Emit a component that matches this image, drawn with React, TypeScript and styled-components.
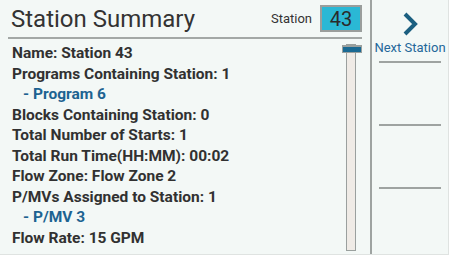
import React from "react";
import styled, { createGlobalStyle } from "styled-components";

const Global = createGlobalStyle`
  html, body { margin: 0; padding: 0; background: #ffffff; }
  body { font-family: Roboto, "Liberation Sans", Arial, sans-serif; }
`;

const Screen = styled.div`
  width: 449px;
  height: 255px;
  box-sizing: border-box;
  border-right: 1px solid #dfe3e1;
  border-bottom: 1px solid #dfe3e1;
  background: #f3f8f6;
  display: flex;
  flex-direction: row;
  overflow: hidden;
`;

const Main = styled.div`
  width: 370px;
  flex-shrink: 0;
  display: flex;
  flex-direction: column;
`;

const Header = styled.div`
  height: 37px;
  margin: 0 8px 0 8px;
  border-bottom: 2px solid #a3a8a6;
  display: flex;
  align-items: flex-start;
  justify-content: space-between;
`;

const Title = styled.div`
  font-size: 24px;
  color: #333;
  padding: 5px 0 0 3px;
  line-height: 28px;
`;

const StationPick = styled.div`
  display: flex;
  align-items: center;
  gap: 8px;
  margin-top: 5px;
`;

const StationLabel = styled.span`
  font-size: 13px;
  color: #333;
`;

const StationBox = styled.div`
  width: 42px;
  height: 27px;
  box-sizing: border-box;
  border: 2px solid #9a9e9c;
  background: #2ab8d5;
  color: #2a2a2a;
  font-size: 20px;
  display: flex;
  align-items: center;
  justify-content: center;
`;

const Body = styled.div`
  flex: 1;
  display: flex;
  flex-direction: row;
  padding: 4px 14px 0 12px;
`;

const List = styled.div`
  flex: 1;
  display: flex;
  flex-direction: column;
`;

const Row = styled.div<{ $sub?: boolean }>`
  height: 20.55px;
  line-height: 20px;
  font-size: 15.5px;
  font-weight: bold;
  white-space: nowrap;
  color: ${(p) => (p.$sub ? "#1d6391" : "#313131")};
  padding-left: ${(p) => (p.$sub ? "11px" : "0")};
`;

const Track = styled.div`
  width: 10px;
  height: 207px;
  margin-top: 1px;
  box-sizing: border-box;
  border: 1px solid #9aa09e;
  background: #efebe6;
  position: relative;
`;

const Thumb = styled.div`
  position: absolute;
  left: -5px;
  top: 0px;
  width: 20px;
  height: 8px;
  box-sizing: border-box;
  border: 1px solid #9aa09e;
  border-top-width: 2px;
  background: #1a6a93;
`;

const Divider = styled.div`
  width: 2px;
  flex-shrink: 0;
  background: #9ea3a1;
`;

const Side = styled.div`
  flex: 1;
  min-width: 0;
  display: flex;
  flex-direction: column;
  padding: 0 7px 0 7px;
`;

const SideButton = styled.div`
  height: 63px;
  border-bottom: 2px solid #9ea3a1;
  display: flex;
  flex-direction: column;
  align-items: center;
  box-sizing: border-box;
`;

const SideLabel = styled.div`
  font-size: 13px;
  color: #24679a;
  margin-top: 4px;
  white-space: nowrap;
`;

const Chevron = () => (
  <svg width="16" height="24" viewBox="0 0 16 24" style={{ marginTop: 12, flexShrink: 0 }}>
    <path d="M3 2 L13 12 L3 22" fill="none" stroke="#1b5f80" strokeWidth="4" />
  </svg>
);

const rows: { t: string; sub?: boolean }[] = [
  { t: "Name: Station 43" },
  { t: "Programs Containing Station: 1" },
  { t: "- Program 6", sub: true },
  { t: "Blocks Containing Station: 0" },
  { t: "Total Number of Starts: 1" },
  { t: "Total Run Time(HH:MM): 00:02" },
  { t: "Flow Zone: Flow Zone 2" },
  { t: "P/MVs Assigned to Station: 1" },
  { t: "- P/MV 3", sub: true },
  { t: "Flow Rate: 15 GPM" },
];

export default function App() {
  return (
    <>
      <Global />
      <Screen>
        <Main>
          <Header>
            <Title>Station Summary</Title>
            <StationPick>
              <StationLabel>Station</StationLabel>
              <StationBox>43</StationBox>
            </StationPick>
          </Header>
          <Body>
            <List>
              {rows.map((r, i) => (
                <Row key={i} $sub={r.sub}>
                  {r.t}
                </Row>
              ))}
            </List>
            <Track>
              <Thumb />
            </Track>
          </Body>
        </Main>
        <Divider />
        <Side>
          <SideButton>
            <Chevron />
            <SideLabel>Next Station</SideLabel>
          </SideButton>
          <SideButton />
          <SideButton />
        </Side>
      </Screen>
    </>
  );
}
